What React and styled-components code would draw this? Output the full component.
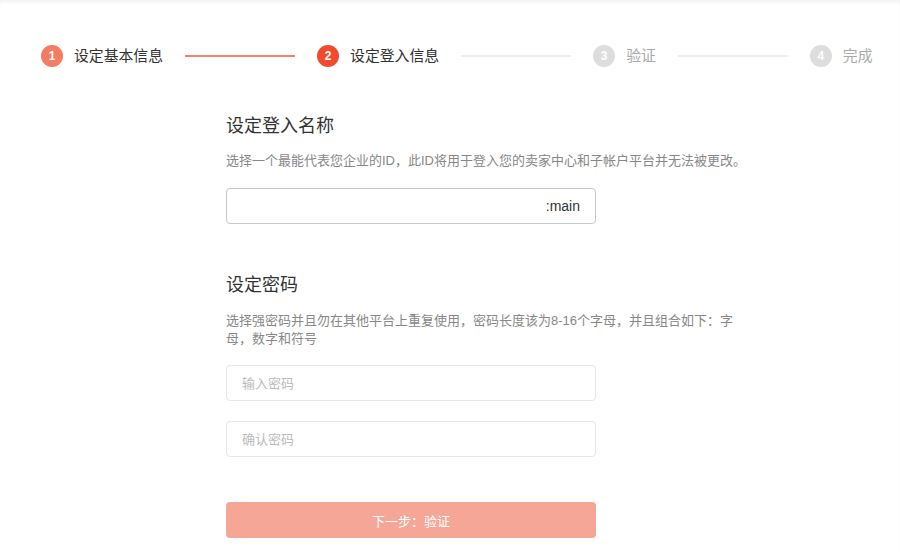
import React from 'react';
import styled, { createGlobalStyle } from 'styled-components';

const GlobalStyle = createGlobalStyle`
  body {
    margin: 0;
    background: #fff;
    font-family: "Liberation Sans", "Noto Sans CJK SC", sans-serif;
  }
`;

const Page = styled.div`
  width: 900px;
  height: 552px;
  overflow: hidden;
  box-shadow: inset 0 4px 4px -2px rgba(0, 0, 0, 0.06);
`;

const Steps = styled.div`
  display: flex;
  align-items: center;
  gap: 22px;
  padding: 45px 0 0 41px;
`;

const Step = styled.div`
  display: flex;
  align-items: center;
  gap: 11px;
`;

const Circle = styled.span`
  width: 22px;
  height: 22px;
  border-radius: 50%;
  background: ${p => p.$color};
  color: #fff;
  font-size: 12px;
  font-weight: bold;
  display: flex;
  align-items: center;
  justify-content: center;
`;

const StepLabel = styled.span`
  font-size: 14.85px;
  line-height: 22px;
  color: ${p => (p.$muted ? '#aaa' : '#333')};
`;

const Line = styled.span`
  width: 110px;
  height: 2px;
  background: ${p => (p.$done ? '#f4836c' : '#eee')};
`;

const Form = styled.div`
  padding-left: 226px;
  display: flex;
  flex-direction: column;
`;

const Heading = styled.h2`
  margin: ${p => p.$top}px 0 0;
  font-size: 18px;
  font-weight: normal;
  line-height: 24px;
  color: #333;
`;

const Desc = styled.p`
  margin: ${p => p.$top}px 0 0;
  width: 512px;
  font-size: 13px;
  line-height: 18px;
  color: #888;
  white-space: ${p => (p.$single ? 'nowrap' : 'normal')};
`;

const Field = styled.div`
  margin-top: ${p => p.$top}px;
  width: 370px;
  height: 36px;
  box-sizing: border-box;
  border: 1px solid ${p => (p.$strong ? '#c8c8c8' : '#e6e6e6')};
  border-radius: 4px;
  display: flex;
  align-items: center;
  padding: 0 15px;
`;

const Input = styled.input`
  flex: 1;
  min-width: 0;
  border: none;
  outline: none;
  padding: 0;
  font-family: inherit;
  font-size: 13px;
  color: #333;
  background: transparent;

  &::placeholder {
    color: #bbb;
  }
`;

const Suffix = styled.span`
  font-size: 14px;
  color: #333;
`;

const Button = styled.button`
  margin-top: 45px;
  width: 370px;
  height: 36px;
  border: none;
  border-radius: 4px;
  background: #f6a696;
  color: #fff;
  font-family: inherit;
  font-size: 13px;
`;

const steps = [
  { n: 1, label: '设定基本信息', color: '#f47c62' },
  { n: 2, label: '设定登入信息', color: '#f04b2f' },
  { n: 3, label: '验证', color: '#ddd', muted: true },
  { n: 4, label: '完成', color: '#ddd', muted: true },
];

export default function App() {
  return (
    <Page>
      <GlobalStyle />
      <Steps>
        {steps.map((s, i) => (
          <React.Fragment key={s.n}>
            {i > 0 && <Line $done={i === 1} />}
            <Step>
              <Circle $color={s.color}>{s.n}</Circle>
              <StepLabel $muted={s.muted}>{s.label}</StepLabel>
            </Step>
          </React.Fragment>
        ))}
      </Steps>
      <Form>
        <Heading $top={47}>设定登入名称</Heading>
        <Desc $top={14} $single>
          选择一个最能代表您企业的ID，此ID将用于登入您的卖家中心和子帐户平台并无法被更改。
        </Desc>
        <Field $top={18} $strong>
          <Input />
          <Suffix>:main</Suffix>
        </Field>

        <Heading $top={49}>设定密码</Heading>
        <Desc $top={15}>
          选择强密码并且勿在其他平台上重复使用，密码长度该为8-16个字母，并且组合如下：字母，数字和符号
        </Desc>
        <Field $top={17}>
          <Input type="password" placeholder="输入密码" />
        </Field>
        <Field $top={20}>
          <Input type="password" placeholder="确认密码" />
        </Field>
        <Button>下一步：验证</Button>
      </Form>
    </Page>
  );
}
